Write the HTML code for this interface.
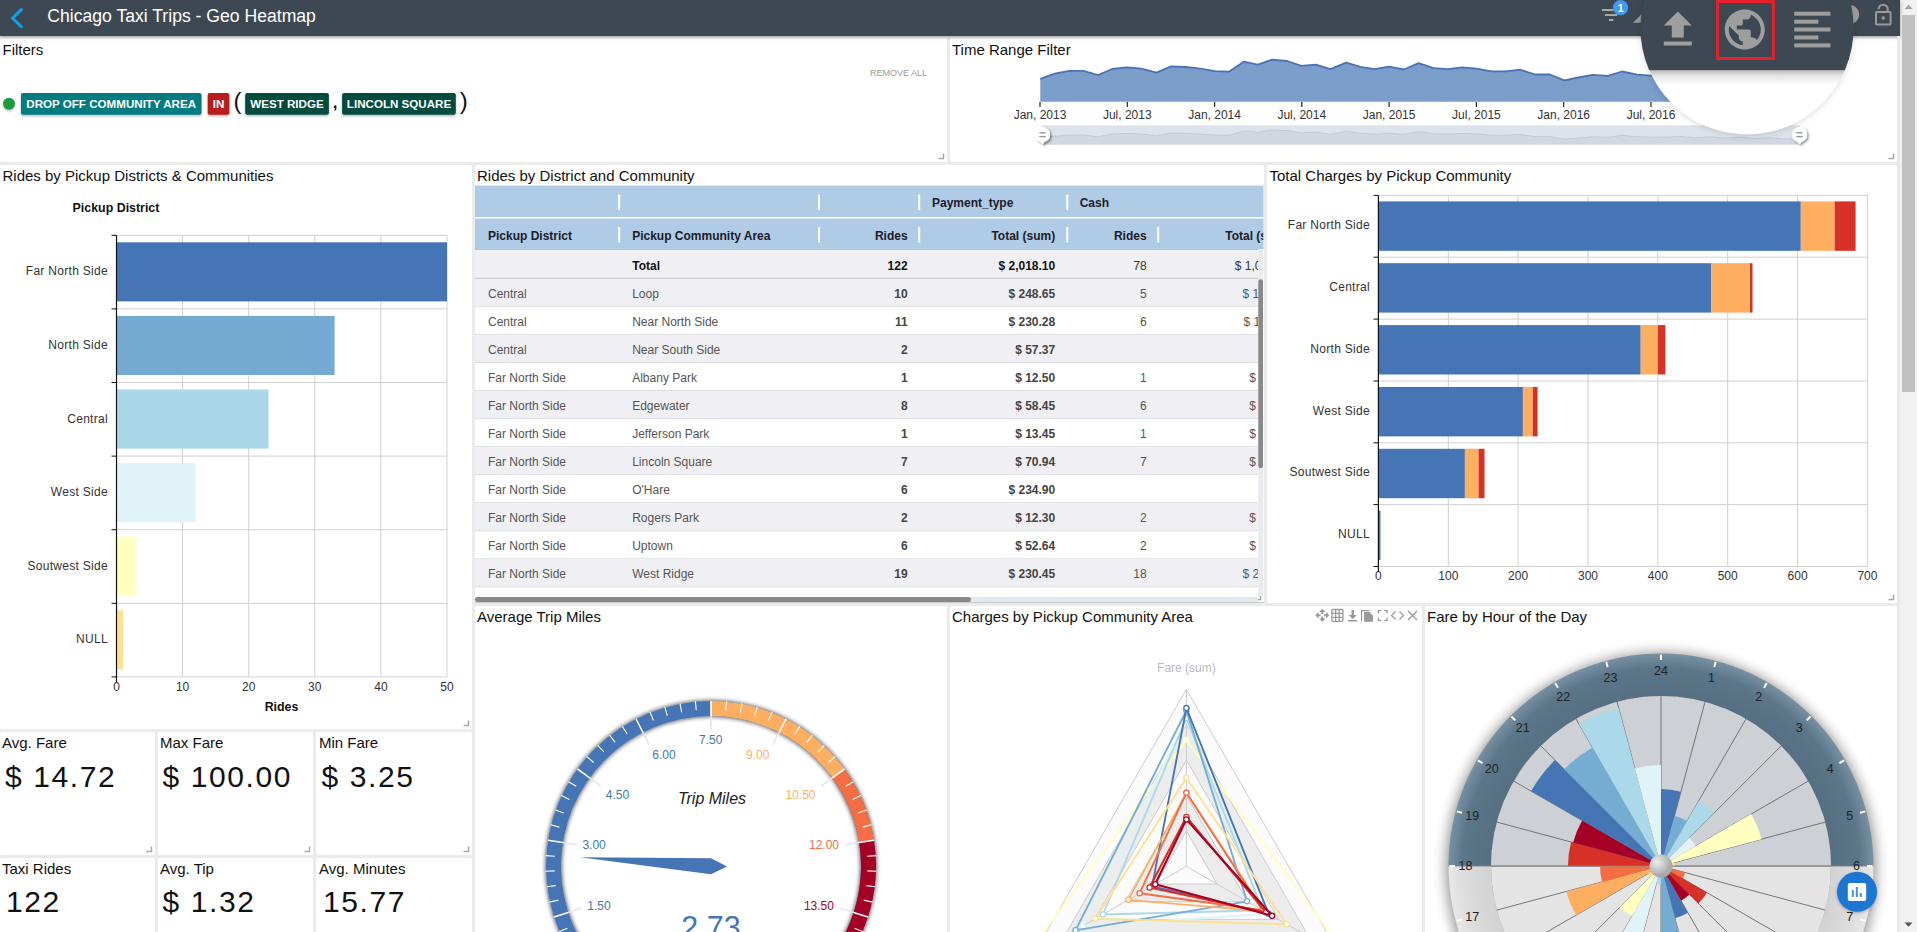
<!DOCTYPE html>
<html><head><meta charset="utf-8"><title>Chicago Taxi Trips - Geo Heatmap</title>
<style>
html,body{margin:0;padding:0;}
body{width:1917px;height:932px;overflow:hidden;background:#ebebeb;position:relative;font-family:"Liberation Sans",sans-serif;}
#hdr{position:absolute;left:0;top:0;width:1900px;height:36px;background:#3e4852;box-shadow:0 1px 4px rgba(0,0,0,.35);z-index:2;}
#sb{position:absolute;left:1900px;top:0;width:17px;height:932px;background:#f1f1f1;border-left:0;}
svg{position:absolute;left:0;top:0;z-index:1;}
#top{z-index:3;}
svg text{font-family:"Liberation Sans",sans-serif;}
</style></head><body>
<svg width="1917" height="932" viewBox="0 0 1917 932">
<rect x="0.0" y="38.0" width="947.0" height="124.0" fill="#fff" rx="2"/>
<rect x="950.0" y="38.0" width="947.0" height="124.0" fill="#fff" rx="2"/>
<rect x="0.0" y="165.0" width="472.0" height="564.0" fill="#fff" rx="2"/>
<rect x="475.0" y="165.0" width="789.0" height="438.0" fill="#fff" rx="2"/>
<rect x="1267.0" y="165.0" width="630.0" height="438.0" fill="#fff" rx="2"/>
<rect x="0.0" y="732.0" width="155.0" height="123.0" fill="#fff" rx="2"/>
<rect x="158.0" y="732.0" width="155.0" height="123.0" fill="#fff" rx="2"/>
<rect x="316.0" y="732.0" width="156.0" height="123.0" fill="#fff" rx="2"/>
<rect x="0.0" y="858.0" width="155.0" height="80.0" fill="#fff" rx="2"/>
<rect x="158.0" y="858.0" width="155.0" height="80.0" fill="#fff" rx="2"/>
<rect x="316.0" y="858.0" width="156.0" height="80.0" fill="#fff" rx="2"/>
<rect x="475.0" y="606.0" width="472.0" height="330.0" fill="#fff" rx="2"/>
<rect x="950.0" y="606.0" width="472.0" height="330.0" fill="#fff" rx="2"/>
<rect x="1425.0" y="606.0" width="472.0" height="330.0" fill="#fff" rx="2"/>
<path d="M938.5,158.5 H943.5 V153.5" stroke="#a8a8a8" stroke-width="1.5" fill="none"/>
<path d="M1888.5,158.5 H1893.5 V153.5" stroke="#a8a8a8" stroke-width="1.5" fill="none"/>
<path d="M463.5,725.5 H468.5 V720.5" stroke="#a8a8a8" stroke-width="1.5" fill="none"/>
<path d="M146.5,851.5 H151.5 V846.5" stroke="#a8a8a8" stroke-width="1.5" fill="none"/>
<path d="M304.5,851.5 H309.5 V846.5" stroke="#a8a8a8" stroke-width="1.5" fill="none"/>
<path d="M463.5,851.5 H468.5 V846.5" stroke="#a8a8a8" stroke-width="1.5" fill="none"/>
<path d="M1888.5,599.5 H1893.5 V594.5" stroke="#a8a8a8" stroke-width="1.5" fill="none"/>
<path d="M1255.5,599.5 H1260.5 V594.5" stroke="#a8a8a8" stroke-width="1.5" fill="none"/>
<text x="2.5" y="54.8" font-size="15" fill="#111" text-anchor="start" font-weight="normal" font-style="normal" >Filters</text>
<text x="952.0" y="54.8" font-size="15" fill="#111" text-anchor="start" font-weight="normal" font-style="normal" >Time Range Filter</text>
<text x="2.5" y="181.0" font-size="15" fill="#111" text-anchor="start" font-weight="normal" font-style="normal" >Rides by Pickup Districts &amp; Communities</text>
<text x="477.0" y="181.0" font-size="15" fill="#111" text-anchor="start" font-weight="normal" font-style="normal" >Rides by District and Community</text>
<text x="1269.5" y="181.0" font-size="15" fill="#111" text-anchor="start" font-weight="normal" font-style="normal" >Total Charges by Pickup Community</text>
<text x="477.0" y="622.0" font-size="15" fill="#111" text-anchor="start" font-weight="normal" font-style="normal" >Average Trip Miles</text>
<text x="952.0" y="622.0" font-size="15" fill="#111" text-anchor="start" font-weight="normal" font-style="normal" >Charges by Pickup Community Area</text>
<text x="1427.0" y="622.0" font-size="15" fill="#111" text-anchor="start" font-weight="normal" font-style="normal" >Fare by Hour of the Day</text>
<text x="2.0" y="747.8" font-size="15" fill="#111" text-anchor="start" font-weight="normal" font-style="normal" >Avg. Fare</text>
<text x="160.0" y="747.8" font-size="15" fill="#111" text-anchor="start" font-weight="normal" font-style="normal" >Max Fare</text>
<text x="319.0" y="747.8" font-size="15" fill="#111" text-anchor="start" font-weight="normal" font-style="normal" >Min Fare</text>
<text x="2.0" y="874.0" font-size="15" fill="#111" text-anchor="start" font-weight="normal" font-style="normal" >Taxi Rides</text>
<text x="160.0" y="874.0" font-size="15" fill="#111" text-anchor="start" font-weight="normal" font-style="normal" >Avg. Tip</text>
<text x="319.0" y="874.0" font-size="15" fill="#111" text-anchor="start" font-weight="normal" font-style="normal" >Avg. Minutes</text>
<text x="5.0" y="787.0" font-size="30" fill="#111" text-anchor="start" font-weight="normal" font-style="normal" letter-spacing="1.6">$ 14.72</text>
<text x="162.5" y="787.0" font-size="30" fill="#111" text-anchor="start" font-weight="normal" font-style="normal" letter-spacing="1.6">$ 100.00</text>
<text x="321.5" y="787.0" font-size="30" fill="#111" text-anchor="start" font-weight="normal" font-style="normal" letter-spacing="1.6">$ 3.25</text>
<text x="6.0" y="911.5" font-size="30" fill="#111" text-anchor="start" font-weight="normal" font-style="normal" letter-spacing="1.6">122</text>
<text x="162.5" y="911.5" font-size="30" fill="#111" text-anchor="start" font-weight="normal" font-style="normal" letter-spacing="1.6">$ 1.32</text>
<text x="323.0" y="911.5" font-size="30" fill="#111" text-anchor="start" font-weight="normal" font-style="normal" letter-spacing="1.6">15.77</text>
<defs><filter id="chipsh" x="-10%" y="-30%" width="120%" height="170%"><feDropShadow dx="0" dy="1.5" stdDeviation="1.3" flood-color="#000" flood-opacity="0.28"/></filter><filter id="hsh" x="-50%" y="-50%" width="200%" height="200%"><feDropShadow dx="1.5" dy="1.5" stdDeviation="1.2" flood-color="#000" flood-opacity="0.45"/></filter><filter id="soft" x="-30%" y="-30%" width="160%" height="160%"><feGaussianBlur stdDeviation="3"/></filter></defs>
<circle cx="9" cy="103.8" r="6" fill="#1f9a3d" filter="url(#chipsh)"/>
<rect x="21" y="93" width="180.5" height="21.7" rx="2" fill="#047b81" filter="url(#chipsh)"/>
<text x="111.2" y="108.0" font-size="11.6" fill="#fff" text-anchor="middle" font-weight="bold" font-style="normal" >DROP OFF COMMUNITY AREA</text>
<rect x="207.7" y="93" width="21.7" height="21.7" rx="2" fill="#b81c1e" filter="url(#chipsh)"/>
<text x="218.6" y="108.0" font-size="11.6" fill="#fff" text-anchor="middle" font-weight="bold" font-style="normal" >IN</text>
<rect x="245.2" y="93" width="83.7" height="21.7" rx="2" fill="#014d40" filter="url(#chipsh)"/>
<text x="287.0" y="108.0" font-size="11.6" fill="#fff" text-anchor="middle" font-weight="bold" font-style="normal" >WEST RIDGE</text>
<rect x="342.1" y="93" width="113.7" height="21.7" rx="2" fill="#014d40" filter="url(#chipsh)"/>
<text x="399.0" y="108.0" font-size="11.6" fill="#fff" text-anchor="middle" font-weight="bold" font-style="normal" >LINCOLN SQUARE</text>
<text x="233.5" y="108.8" font-size="24" fill="#111" text-anchor="start" font-weight="normal" font-style="normal" >(</text>
<text x="332.8" y="108.0" font-size="17" fill="#111" text-anchor="start" font-weight="bold" font-style="normal" >,</text>
<text x="459.8" y="108.8" font-size="24" fill="#111" text-anchor="start" font-weight="normal" font-style="normal" >)</text>
<text x="870.0" y="75.9" font-size="9" fill="#9a9a9a" text-anchor="start" font-weight="normal" font-style="normal" >REMOVE ALL</text>
<path d="M1040.3,101.8 L1040.3,78.9 L1054.7,73.7 L1069.2,70.9 L1083.4,70.9 L1098.1,75.0 L1112.1,69.0 L1126.8,67.4 L1141.4,68.7 L1156.4,72.7 L1171.1,66.4 L1185.3,67.0 L1200.3,68.7 L1215.0,71.2 L1229.0,71.7 L1243.7,61.7 L1257.9,64.7 L1272.1,59.7 L1287.1,61.0 L1301.3,65.9 L1315.8,64.7 L1330.5,69.2 L1346.2,62.6 L1360.4,66.9 L1374.6,69.2 L1388.8,66.7 L1403.9,69.5 L1418.6,63.2 L1433.5,68.1 L1447.7,69.2 L1462.4,67.4 L1476.6,68.7 L1491.6,71.3 L1505.8,71.3 L1520.0,69.7 L1535.1,74.5 L1549.8,74.5 L1564.4,80.4 L1578.6,77.5 L1592.7,74.9 L1607.8,75.9 L1622.0,71.5 L1637.1,74.7 L1651.3,75.6 L1666.0,76.0 L1680.0,74.0 L1695.0,77.0 L1710.0,75.0 L1725.0,78.0 L1740.0,76.0 L1755.0,79.0 L1770.0,77.0 L1785.0,80.0 L1800.0,79.0 L1800.0,101.8 Z" fill="#7b9dca"/>
<polyline points="1040.3,78.9 1054.7,73.7 1069.2,70.9 1083.4,70.9 1098.1,75.0 1112.1,69.0 1126.8,67.4 1141.4,68.7 1156.4,72.7 1171.1,66.4 1185.3,67.0 1200.3,68.7 1215.0,71.2 1229.0,71.7 1243.7,61.7 1257.9,64.7 1272.1,59.7 1287.1,61.0 1301.3,65.9 1315.8,64.7 1330.5,69.2 1346.2,62.6 1360.4,66.9 1374.6,69.2 1388.8,66.7 1403.9,69.5 1418.6,63.2 1433.5,68.1 1447.7,69.2 1462.4,67.4 1476.6,68.7 1491.6,71.3 1505.8,71.3 1520.0,69.7 1535.1,74.5 1549.8,74.5 1564.4,80.4 1578.6,77.5 1592.7,74.9 1607.8,75.9 1622.0,71.5 1637.1,74.7 1651.3,75.6 1666.0,76.0 1680.0,74.0 1695.0,77.0 1710.0,75.0 1725.0,78.0 1740.0,76.0 1755.0,79.0 1770.0,77.0 1785.0,80.0 1800.0,79.0" fill="none" stroke="#4a73b5" stroke-width="1.8" stroke-linejoin="round"/>
<line x1="1040.0" y1="102.0" x2="1040.0" y2="107.0" stroke="#222" stroke-width="1.2" />
<text x="1040.0" y="118.7" font-size="12" fill="#333" text-anchor="middle" font-weight="normal" font-style="normal" >Jan, 2013</text>
<line x1="1127.3" y1="102.0" x2="1127.3" y2="107.0" stroke="#222" stroke-width="1.2" />
<text x="1127.3" y="118.7" font-size="12" fill="#333" text-anchor="middle" font-weight="normal" font-style="normal" >Jul, 2013</text>
<line x1="1214.6" y1="102.0" x2="1214.6" y2="107.0" stroke="#222" stroke-width="1.2" />
<text x="1214.6" y="118.7" font-size="12" fill="#333" text-anchor="middle" font-weight="normal" font-style="normal" >Jan, 2014</text>
<line x1="1301.8" y1="102.0" x2="1301.8" y2="107.0" stroke="#222" stroke-width="1.2" />
<text x="1301.8" y="118.7" font-size="12" fill="#333" text-anchor="middle" font-weight="normal" font-style="normal" >Jul, 2014</text>
<line x1="1389.1" y1="102.0" x2="1389.1" y2="107.0" stroke="#222" stroke-width="1.2" />
<text x="1389.1" y="118.7" font-size="12" fill="#333" text-anchor="middle" font-weight="normal" font-style="normal" >Jan, 2015</text>
<line x1="1476.4" y1="102.0" x2="1476.4" y2="107.0" stroke="#222" stroke-width="1.2" />
<text x="1476.4" y="118.7" font-size="12" fill="#333" text-anchor="middle" font-weight="normal" font-style="normal" >Jul, 2015</text>
<line x1="1563.7" y1="102.0" x2="1563.7" y2="107.0" stroke="#222" stroke-width="1.2" />
<text x="1563.7" y="118.7" font-size="12" fill="#333" text-anchor="middle" font-weight="normal" font-style="normal" >Jan, 2016</text>
<line x1="1651.0" y1="102.0" x2="1651.0" y2="107.0" stroke="#222" stroke-width="1.2" />
<text x="1651.0" y="118.7" font-size="12" fill="#333" text-anchor="middle" font-weight="normal" font-style="normal" >Jul, 2016</text>
<rect x="1042" y="125.3" width="758" height="19.3" fill="#dde3eb"/>
<path d="M1042,144.6 L1040.3,138.5 L1054.7,136.2 L1069.2,135.0 L1083.4,135.0 L1098.1,136.8 L1112.1,134.1 L1126.8,133.4 L1141.4,134.0 L1156.4,135.8 L1171.1,133.0 L1185.3,133.3 L1200.3,134.0 L1215.0,135.1 L1229.0,135.3 L1243.7,130.9 L1257.9,132.2 L1272.1,130.0 L1287.1,130.6 L1301.3,132.8 L1315.8,132.2 L1330.5,134.2 L1346.2,131.3 L1360.4,133.2 L1374.6,134.2 L1388.8,133.1 L1403.9,134.4 L1418.6,131.6 L1433.5,133.7 L1447.7,134.2 L1462.4,133.4 L1476.6,134.0 L1491.6,135.2 L1505.8,135.2 L1520.0,134.5 L1535.1,136.6 L1549.8,136.6 L1564.4,139.2 L1578.6,137.9 L1592.7,136.8 L1607.8,137.2 L1622.0,135.3 L1637.1,136.7 L1651.3,137.1 L1666.0,137.2 L1680.0,136.4 L1695.0,137.7 L1710.0,136.8 L1725.0,138.1 L1740.0,137.2 L1755.0,138.6 L1770.0,137.7 L1785.0,139.0 L1800.0,138.6 L1800,144.6 Z" fill="#d0d7e0"/>
<polyline points="1040.3,138.5 1054.7,136.2 1069.2,135.0 1083.4,135.0 1098.1,136.8 1112.1,134.1 1126.8,133.4 1141.4,134.0 1156.4,135.8 1171.1,133.0 1185.3,133.3 1200.3,134.0 1215.0,135.1 1229.0,135.3 1243.7,130.9 1257.9,132.2 1272.1,130.0 1287.1,130.6 1301.3,132.8 1315.8,132.2 1330.5,134.2 1346.2,131.3 1360.4,133.2 1374.6,134.2 1388.8,133.1 1403.9,134.4 1418.6,131.6 1433.5,133.7 1447.7,134.2 1462.4,133.4 1476.6,134.0 1491.6,135.2 1505.8,135.2 1520.0,134.5 1535.1,136.6 1549.8,136.6 1564.4,139.2 1578.6,137.9 1592.7,136.8 1607.8,137.2 1622.0,135.3 1637.1,136.7 1651.3,137.1 1666.0,137.2 1680.0,136.4 1695.0,137.7 1710.0,136.8 1725.0,138.1 1740.0,137.2 1755.0,138.6 1770.0,137.7 1785.0,139.0 1800.0,138.6" fill="none" stroke="#bcc5d1" stroke-width="0.8"/>
<g filter="url(#hsh)"><circle cx="1042.5" cy="134.7" r="7.6" fill="#fff"/><path d="M1040.5,141.7 L1042.5,144.7 L1044.5,141.7 Z" fill="#fff"/></g>
<rect x="1039.3" y="132.1" width="6.4" height="1.4" fill="#999"/><rect x="1039.3" y="135.89999999999998" width="6.4" height="1.4" fill="#999"/>
<g filter="url(#hsh)"><circle cx="1799.5" cy="134.7" r="7.6" fill="#fff"/><path d="M1797.5,141.7 L1799.5,144.7 L1801.5,141.7 Z" fill="#fff"/></g>
<rect x="1796.3" y="132.1" width="6.4" height="1.4" fill="#999"/><rect x="1796.3" y="135.89999999999998" width="6.4" height="1.4" fill="#999"/>
<line x1="116.5" y1="235.3" x2="116.5" y2="676.9" stroke="#d0d0d0" stroke-width="1" />
<text x="116.5" y="691.3" font-size="12" fill="#333" text-anchor="middle" font-weight="normal" font-style="normal" >0</text>
<line x1="182.6" y1="235.3" x2="182.6" y2="676.9" stroke="#d0d0d0" stroke-width="1" />
<text x="182.6" y="691.3" font-size="12" fill="#333" text-anchor="middle" font-weight="normal" font-style="normal" >10</text>
<line x1="248.7" y1="235.3" x2="248.7" y2="676.9" stroke="#d0d0d0" stroke-width="1" />
<text x="248.7" y="691.3" font-size="12" fill="#333" text-anchor="middle" font-weight="normal" font-style="normal" >20</text>
<line x1="314.8" y1="235.3" x2="314.8" y2="676.9" stroke="#d0d0d0" stroke-width="1" />
<text x="314.8" y="691.3" font-size="12" fill="#333" text-anchor="middle" font-weight="normal" font-style="normal" >30</text>
<line x1="380.9" y1="235.3" x2="380.9" y2="676.9" stroke="#d0d0d0" stroke-width="1" />
<text x="380.9" y="691.3" font-size="12" fill="#333" text-anchor="middle" font-weight="normal" font-style="normal" >40</text>
<line x1="447.0" y1="235.3" x2="447.0" y2="676.9" stroke="#d0d0d0" stroke-width="1" />
<text x="447.0" y="691.3" font-size="12" fill="#333" text-anchor="middle" font-weight="normal" font-style="normal" >50</text>
<line x1="116.5" y1="235.3" x2="447.0" y2="235.3" stroke="#d0d0d0" stroke-width="1" />
<line x1="116.5" y1="308.9" x2="447.0" y2="308.9" stroke="#d0d0d0" stroke-width="1" />
<line x1="116.5" y1="382.5" x2="447.0" y2="382.5" stroke="#d0d0d0" stroke-width="1" />
<line x1="116.5" y1="456.1" x2="447.0" y2="456.1" stroke="#d0d0d0" stroke-width="1" />
<line x1="116.5" y1="529.7" x2="447.0" y2="529.7" stroke="#d0d0d0" stroke-width="1" />
<line x1="116.5" y1="603.3" x2="447.0" y2="603.3" stroke="#d0d0d0" stroke-width="1" />
<line x1="116.5" y1="676.9" x2="447.0" y2="676.9" stroke="#d0d0d0" stroke-width="1" />
<rect x="117.0" y="242.3" width="330.0" height="59.1" fill="#4575b4" />
<text x="108.0" y="275.4" font-size="12" fill="#333" text-anchor="end" font-weight="normal" font-style="normal" letter-spacing="0.3">Far North Side</text>
<line x1="111.5" y1="235.3" x2="116.5" y2="235.3" stroke="#111" stroke-width="1" />
<rect x="117.0" y="315.9" width="217.6" height="59.1" fill="#74aad2" />
<text x="108.0" y="349.0" font-size="12" fill="#333" text-anchor="end" font-weight="normal" font-style="normal" letter-spacing="0.3">North Side</text>
<line x1="111.5" y1="308.9" x2="116.5" y2="308.9" stroke="#111" stroke-width="1" />
<rect x="117.0" y="389.5" width="151.5" height="59.1" fill="#abd8e9" />
<text x="108.0" y="422.6" font-size="12" fill="#333" text-anchor="end" font-weight="normal" font-style="normal" letter-spacing="0.3">Central</text>
<line x1="111.5" y1="382.5" x2="116.5" y2="382.5" stroke="#111" stroke-width="1" />
<rect x="117.0" y="463.1" width="78.8" height="59.1" fill="#e0f3f8" />
<text x="108.0" y="496.2" font-size="12" fill="#333" text-anchor="end" font-weight="normal" font-style="normal" letter-spacing="0.3">West Side</text>
<line x1="111.5" y1="456.1" x2="116.5" y2="456.1" stroke="#111" stroke-width="1" />
<rect x="117.0" y="536.7" width="19.3" height="59.1" fill="#ffffbf" />
<text x="108.0" y="569.8" font-size="12" fill="#333" text-anchor="end" font-weight="normal" font-style="normal" letter-spacing="0.3">Soutwest Side</text>
<line x1="111.5" y1="529.7" x2="116.5" y2="529.7" stroke="#111" stroke-width="1" />
<rect x="117.0" y="610.3" width="6.1" height="59.1" fill="#fee090" />
<text x="108.0" y="643.4" font-size="12" fill="#333" text-anchor="end" font-weight="normal" font-style="normal" letter-spacing="0.3">NULL</text>
<line x1="111.5" y1="603.3" x2="116.5" y2="603.3" stroke="#111" stroke-width="1" />
<line x1="111.5" y1="676.9" x2="116.5" y2="676.9" stroke="#111" stroke-width="1" />
<line x1="116.5" y1="235.3" x2="116.5" y2="681.9" stroke="#111" stroke-width="1.2" />
<text x="116.0" y="211.8" font-size="12.4" fill="#111" text-anchor="middle" font-weight="bold" font-style="normal" >Pickup District</text>
<text x="281.5" y="711.0" font-size="12.4" fill="#111" text-anchor="middle" font-weight="bold" font-style="normal" >Rides</text>
<line x1="1378.4" y1="195.4" x2="1378.4" y2="566.5" stroke="#d0d0d0" stroke-width="1" />
<text x="1378.4" y="579.5" font-size="12" fill="#333" text-anchor="middle" font-weight="normal" font-style="normal" >0</text>
<line x1="1448.3" y1="195.4" x2="1448.3" y2="566.5" stroke="#d0d0d0" stroke-width="1" />
<text x="1448.3" y="579.5" font-size="12" fill="#333" text-anchor="middle" font-weight="normal" font-style="normal" >100</text>
<line x1="1518.1" y1="195.4" x2="1518.1" y2="566.5" stroke="#d0d0d0" stroke-width="1" />
<text x="1518.1" y="579.5" font-size="12" fill="#333" text-anchor="middle" font-weight="normal" font-style="normal" >200</text>
<line x1="1588.0" y1="195.4" x2="1588.0" y2="566.5" stroke="#d0d0d0" stroke-width="1" />
<text x="1588.0" y="579.5" font-size="12" fill="#333" text-anchor="middle" font-weight="normal" font-style="normal" >300</text>
<line x1="1657.8" y1="195.4" x2="1657.8" y2="566.5" stroke="#d0d0d0" stroke-width="1" />
<text x="1657.8" y="579.5" font-size="12" fill="#333" text-anchor="middle" font-weight="normal" font-style="normal" >400</text>
<line x1="1727.7" y1="195.4" x2="1727.7" y2="566.5" stroke="#d0d0d0" stroke-width="1" />
<text x="1727.7" y="579.5" font-size="12" fill="#333" text-anchor="middle" font-weight="normal" font-style="normal" >500</text>
<line x1="1797.6" y1="195.4" x2="1797.6" y2="566.5" stroke="#d0d0d0" stroke-width="1" />
<text x="1797.6" y="579.5" font-size="12" fill="#333" text-anchor="middle" font-weight="normal" font-style="normal" >600</text>
<line x1="1867.4" y1="195.4" x2="1867.4" y2="566.5" stroke="#d0d0d0" stroke-width="1" />
<text x="1867.4" y="579.5" font-size="12" fill="#333" text-anchor="middle" font-weight="normal" font-style="normal" >700</text>
<line x1="1378.4" y1="195.4" x2="1867.4" y2="195.4" stroke="#d0d0d0" stroke-width="1" />
<line x1="1378.4" y1="257.2" x2="1867.4" y2="257.2" stroke="#d0d0d0" stroke-width="1" />
<line x1="1378.4" y1="319.1" x2="1867.4" y2="319.1" stroke="#d0d0d0" stroke-width="1" />
<line x1="1378.4" y1="381.0" x2="1867.4" y2="381.0" stroke="#d0d0d0" stroke-width="1" />
<line x1="1378.4" y1="442.8" x2="1867.4" y2="442.8" stroke="#d0d0d0" stroke-width="1" />
<line x1="1378.4" y1="504.6" x2="1867.4" y2="504.6" stroke="#d0d0d0" stroke-width="1" />
<line x1="1378.4" y1="566.5" x2="1867.4" y2="566.5" stroke="#d0d0d0" stroke-width="1" />
<rect x="1378.9" y="201.4" width="421.9" height="49.4" fill="#4575b4" />
<rect x="1800.8" y="201.4" width="33.9" height="49.4" fill="#fdae61" />
<rect x="1834.7" y="201.4" width="20.9" height="49.4" fill="#d73027" />
<text x="1370.0" y="229.0" font-size="12" fill="#333" text-anchor="end" font-weight="normal" font-style="normal" letter-spacing="0.3">Far North Side</text>
<line x1="1373.5" y1="195.4" x2="1378.4" y2="195.4" stroke="#111" stroke-width="1" />
<rect x="1378.9" y="263.2" width="332.4" height="49.4" fill="#4575b4" />
<rect x="1711.3" y="263.2" width="38.7" height="49.4" fill="#fdae61" />
<rect x="1750.0" y="263.2" width="2.5" height="49.4" fill="#d73027" />
<text x="1370.0" y="290.9" font-size="12" fill="#333" text-anchor="end" font-weight="normal" font-style="normal" letter-spacing="0.3">Central</text>
<line x1="1373.5" y1="257.2" x2="1378.4" y2="257.2" stroke="#111" stroke-width="1" />
<rect x="1378.9" y="325.1" width="261.8" height="49.4" fill="#4575b4" />
<rect x="1640.7" y="325.1" width="17.2" height="49.4" fill="#fdae61" />
<rect x="1657.9" y="325.1" width="7.5" height="49.4" fill="#d73027" />
<text x="1370.0" y="352.7" font-size="12" fill="#333" text-anchor="end" font-weight="normal" font-style="normal" letter-spacing="0.3">North Side</text>
<line x1="1373.5" y1="319.1" x2="1378.4" y2="319.1" stroke="#111" stroke-width="1" />
<rect x="1378.9" y="387.0" width="144.0" height="49.4" fill="#4575b4" />
<rect x="1522.9" y="387.0" width="9.9" height="49.4" fill="#fdae61" />
<rect x="1532.8" y="387.0" width="4.8" height="49.4" fill="#d73027" />
<text x="1370.0" y="414.6" font-size="12" fill="#333" text-anchor="end" font-weight="normal" font-style="normal" letter-spacing="0.3">West Side</text>
<line x1="1373.5" y1="381.0" x2="1378.4" y2="381.0" stroke="#111" stroke-width="1" />
<rect x="1378.9" y="448.8" width="86.0" height="49.4" fill="#4575b4" />
<rect x="1464.9" y="448.8" width="13.7" height="49.4" fill="#fdae61" />
<rect x="1478.6" y="448.8" width="5.9" height="49.4" fill="#d73027" />
<text x="1370.0" y="476.4" font-size="12" fill="#333" text-anchor="end" font-weight="normal" font-style="normal" letter-spacing="0.3">Soutwest Side</text>
<line x1="1373.5" y1="442.8" x2="1378.4" y2="442.8" stroke="#111" stroke-width="1" />
<rect x="1378.9" y="510.6" width="1.6" height="49.4" fill="#4575b4" />
<text x="1370.0" y="538.3" font-size="12" fill="#333" text-anchor="end" font-weight="normal" font-style="normal" letter-spacing="0.3">NULL</text>
<line x1="1373.5" y1="504.6" x2="1378.4" y2="504.6" stroke="#111" stroke-width="1" />
<line x1="1373.5" y1="566.5" x2="1378.4" y2="566.5" stroke="#111" stroke-width="1" />
<line x1="1378.4" y1="195.4" x2="1378.4" y2="571.5" stroke="#111" stroke-width="1.2" />
<defs><clipPath id="tclip"><rect x="475" y="185" width="783.3" height="412"/></clipPath></defs>
<rect x="475.0" y="185.6" width="788.5" height="31.4" fill="#b0cbe5" />
<rect x="475.0" y="218.5" width="788.5" height="30.8" fill="#b0cbe5" />
<defs><clipPath id="hclip"><rect x="475" y="185" width="788.3" height="65"/></clipPath></defs><g clip-path="url(#hclip)">
<text x="1225.2" y="239.8" font-size="12" fill="#1b1b2a" text-anchor="start" font-weight="bold" font-style="normal" >Total (sum)</text>
</g>
<g clip-path="url(#tclip)">
<line x1="475.0" y1="249.5" x2="1264.0" y2="249.5" stroke="#b9c3cc" stroke-width="1" />
<line x1="619.2" y1="194.5" x2="619.2" y2="210.0" stroke="#fff" stroke-width="2" />
<line x1="819.0" y1="194.5" x2="819.0" y2="210.0" stroke="#fff" stroke-width="2" />
<line x1="919.2" y1="194.5" x2="919.2" y2="210.0" stroke="#fff" stroke-width="2" />
<line x1="1067.3" y1="194.5" x2="1067.3" y2="210.0" stroke="#fff" stroke-width="2" />
<line x1="619.2" y1="227.0" x2="619.2" y2="242.5" stroke="#fff" stroke-width="2" />
<line x1="819.0" y1="227.0" x2="819.0" y2="242.5" stroke="#fff" stroke-width="2" />
<line x1="919.2" y1="227.0" x2="919.2" y2="242.5" stroke="#fff" stroke-width="2" />
<line x1="1067.3" y1="227.0" x2="1067.3" y2="242.5" stroke="#fff" stroke-width="2" />
<line x1="1158.2" y1="227.0" x2="1158.2" y2="242.5" stroke="#fff" stroke-width="2" />
<text x="932.0" y="207.1" font-size="12" fill="#1b1b2a" text-anchor="start" font-weight="bold" font-style="normal" >Payment_type</text>
<text x="1079.7" y="207.1" font-size="12" fill="#1b1b2a" text-anchor="start" font-weight="bold" font-style="normal" >Cash</text>
<text x="488.0" y="239.8" font-size="12" fill="#1b1b2a" text-anchor="start" font-weight="bold" font-style="normal" >Pickup District</text>
<text x="632.2" y="239.8" font-size="12" fill="#1b1b2a" text-anchor="start" font-weight="bold" font-style="normal" >Pickup Community Area</text>
<text x="907.6" y="239.8" font-size="12" fill="#1b1b2a" text-anchor="end" font-weight="bold" font-style="normal" >Rides</text>
<text x="1055.2" y="239.8" font-size="12" fill="#1b1b2a" text-anchor="end" font-weight="bold" font-style="normal" >Total (sum)</text>
<text x="1146.6" y="239.8" font-size="12" fill="#1b1b2a" text-anchor="end" font-weight="bold" font-style="normal" >Rides</text>
<rect x="475.0" y="250.0" width="789.0" height="28.3" fill="#f0f0f4" />
<line x1="475.0" y1="278.3" x2="1264.0" y2="278.3" stroke="#c4c8cd" stroke-width="1.2" />
<text x="632.2" y="269.5" font-size="12" fill="#111" text-anchor="start" font-weight="bold" font-style="normal" >Total</text>
<text x="907.6" y="269.5" font-size="12" fill="#111" text-anchor="end" font-weight="bold" font-style="normal" >122</text>
<text x="1055.2" y="269.5" font-size="12" fill="#111" text-anchor="end" font-weight="bold" font-style="normal" >$ 2,018.10</text>
<text x="1146.6" y="269.5" font-size="12" fill="#333" text-anchor="end" font-weight="normal" font-style="normal" >78</text>
<text x="1234.8" y="269.5" font-size="12" fill="#333" text-anchor="start" font-weight="normal" font-style="normal" >$ 1,076.10</text>
<rect x="475.0" y="278.9" width="789.0" height="27.4" fill="#f0f0f4" />
<line x1="475.0" y1="306.4" x2="1264.0" y2="306.4" stroke="#d9dce0" stroke-width="1" />
<text x="488.0" y="297.9" font-size="12" fill="#555" text-anchor="start" font-weight="normal" font-style="normal" >Central</text>
<text x="632.2" y="297.9" font-size="12" fill="#555" text-anchor="start" font-weight="normal" font-style="normal" >Loop</text>
<text x="907.6" y="297.9" font-size="12" fill="#444" text-anchor="end" font-weight="bold" font-style="normal" >10</text>
<text x="1055.2" y="297.9" font-size="12" fill="#444" text-anchor="end" font-weight="bold" font-style="normal" >$ 248.65</text>
<text x="1146.6" y="297.9" font-size="12" fill="#555" text-anchor="end" font-weight="normal" font-style="normal" >5</text>
<text x="1289.3" y="297.9" font-size="12" fill="#555" text-anchor="end" font-weight="normal" font-style="normal" >$ 124.50</text>
<line x1="475.0" y1="334.4" x2="1264.0" y2="334.4" stroke="#d9dce0" stroke-width="1" />
<text x="488.0" y="326.0" font-size="12" fill="#555" text-anchor="start" font-weight="normal" font-style="normal" >Central</text>
<text x="632.2" y="326.0" font-size="12" fill="#555" text-anchor="start" font-weight="normal" font-style="normal" >Near North Side</text>
<text x="907.6" y="326.0" font-size="12" fill="#444" text-anchor="end" font-weight="bold" font-style="normal" >11</text>
<text x="1055.2" y="326.0" font-size="12" fill="#444" text-anchor="end" font-weight="bold" font-style="normal" >$ 230.28</text>
<text x="1146.6" y="326.0" font-size="12" fill="#555" text-anchor="end" font-weight="normal" font-style="normal" >6</text>
<text x="1289.3" y="326.0" font-size="12" fill="#555" text-anchor="end" font-weight="normal" font-style="normal" >$ 117.80</text>
<rect x="475.0" y="335.0" width="789.0" height="27.4" fill="#f0f0f4" />
<line x1="475.0" y1="362.5" x2="1264.0" y2="362.5" stroke="#d9dce0" stroke-width="1" />
<text x="488.0" y="354.0" font-size="12" fill="#555" text-anchor="start" font-weight="normal" font-style="normal" >Central</text>
<text x="632.2" y="354.0" font-size="12" fill="#555" text-anchor="start" font-weight="normal" font-style="normal" >Near South Side</text>
<text x="907.6" y="354.0" font-size="12" fill="#444" text-anchor="end" font-weight="bold" font-style="normal" >2</text>
<text x="1055.2" y="354.0" font-size="12" fill="#444" text-anchor="end" font-weight="bold" font-style="normal" >$ 57.37</text>
<line x1="475.0" y1="390.5" x2="1264.0" y2="390.5" stroke="#d9dce0" stroke-width="1" />
<text x="488.0" y="382.1" font-size="12" fill="#555" text-anchor="start" font-weight="normal" font-style="normal" >Far North Side</text>
<text x="632.2" y="382.1" font-size="12" fill="#555" text-anchor="start" font-weight="normal" font-style="normal" >Albany Park</text>
<text x="907.6" y="382.1" font-size="12" fill="#444" text-anchor="end" font-weight="bold" font-style="normal" >1</text>
<text x="1055.2" y="382.1" font-size="12" fill="#444" text-anchor="end" font-weight="bold" font-style="normal" >$ 12.50</text>
<text x="1146.6" y="382.1" font-size="12" fill="#555" text-anchor="end" font-weight="normal" font-style="normal" >1</text>
<text x="1289.3" y="382.1" font-size="12" fill="#555" text-anchor="end" font-weight="normal" font-style="normal" >$ 12.50</text>
<rect x="475.0" y="391.1" width="789.0" height="27.4" fill="#f0f0f4" />
<line x1="475.0" y1="418.6" x2="1264.0" y2="418.6" stroke="#d9dce0" stroke-width="1" />
<text x="488.0" y="410.1" font-size="12" fill="#555" text-anchor="start" font-weight="normal" font-style="normal" >Far North Side</text>
<text x="632.2" y="410.1" font-size="12" fill="#555" text-anchor="start" font-weight="normal" font-style="normal" >Edgewater</text>
<text x="907.6" y="410.1" font-size="12" fill="#444" text-anchor="end" font-weight="bold" font-style="normal" >8</text>
<text x="1055.2" y="410.1" font-size="12" fill="#444" text-anchor="end" font-weight="bold" font-style="normal" >$ 58.45</text>
<text x="1146.6" y="410.1" font-size="12" fill="#555" text-anchor="end" font-weight="normal" font-style="normal" >6</text>
<text x="1289.3" y="410.1" font-size="12" fill="#555" text-anchor="end" font-weight="normal" font-style="normal" >$ 45.30</text>
<line x1="475.0" y1="446.6" x2="1264.0" y2="446.6" stroke="#d9dce0" stroke-width="1" />
<text x="488.0" y="438.2" font-size="12" fill="#555" text-anchor="start" font-weight="normal" font-style="normal" >Far North Side</text>
<text x="632.2" y="438.2" font-size="12" fill="#555" text-anchor="start" font-weight="normal" font-style="normal" >Jefferson Park</text>
<text x="907.6" y="438.2" font-size="12" fill="#444" text-anchor="end" font-weight="bold" font-style="normal" >1</text>
<text x="1055.2" y="438.2" font-size="12" fill="#444" text-anchor="end" font-weight="bold" font-style="normal" >$ 13.45</text>
<text x="1146.6" y="438.2" font-size="12" fill="#555" text-anchor="end" font-weight="normal" font-style="normal" >1</text>
<text x="1289.3" y="438.2" font-size="12" fill="#555" text-anchor="end" font-weight="normal" font-style="normal" >$ 13.45</text>
<rect x="475.0" y="447.2" width="789.0" height="27.4" fill="#f0f0f4" />
<line x1="475.0" y1="474.7" x2="1264.0" y2="474.7" stroke="#d9dce0" stroke-width="1" />
<text x="488.0" y="466.2" font-size="12" fill="#555" text-anchor="start" font-weight="normal" font-style="normal" >Far North Side</text>
<text x="632.2" y="466.2" font-size="12" fill="#555" text-anchor="start" font-weight="normal" font-style="normal" >Lincoln Square</text>
<text x="907.6" y="466.2" font-size="12" fill="#444" text-anchor="end" font-weight="bold" font-style="normal" >7</text>
<text x="1055.2" y="466.2" font-size="12" fill="#444" text-anchor="end" font-weight="bold" font-style="normal" >$ 70.94</text>
<text x="1146.6" y="466.2" font-size="12" fill="#555" text-anchor="end" font-weight="normal" font-style="normal" >7</text>
<text x="1289.3" y="466.2" font-size="12" fill="#555" text-anchor="end" font-weight="normal" font-style="normal" >$ 70.94</text>
<line x1="475.0" y1="502.7" x2="1264.0" y2="502.7" stroke="#d9dce0" stroke-width="1" />
<text x="488.0" y="494.2" font-size="12" fill="#555" text-anchor="start" font-weight="normal" font-style="normal" >Far North Side</text>
<text x="632.2" y="494.2" font-size="12" fill="#555" text-anchor="start" font-weight="normal" font-style="normal" >O'Hare</text>
<text x="907.6" y="494.2" font-size="12" fill="#444" text-anchor="end" font-weight="bold" font-style="normal" >6</text>
<text x="1055.2" y="494.2" font-size="12" fill="#444" text-anchor="end" font-weight="bold" font-style="normal" >$ 234.90</text>
<rect x="475.0" y="503.3" width="789.0" height="27.4" fill="#f0f0f4" />
<line x1="475.0" y1="530.8" x2="1264.0" y2="530.8" stroke="#d9dce0" stroke-width="1" />
<text x="488.0" y="522.3" font-size="12" fill="#555" text-anchor="start" font-weight="normal" font-style="normal" >Far North Side</text>
<text x="632.2" y="522.3" font-size="12" fill="#555" text-anchor="start" font-weight="normal" font-style="normal" >Rogers Park</text>
<text x="907.6" y="522.3" font-size="12" fill="#444" text-anchor="end" font-weight="bold" font-style="normal" >2</text>
<text x="1055.2" y="522.3" font-size="12" fill="#444" text-anchor="end" font-weight="bold" font-style="normal" >$ 12.30</text>
<text x="1146.6" y="522.3" font-size="12" fill="#555" text-anchor="end" font-weight="normal" font-style="normal" >2</text>
<text x="1289.3" y="522.3" font-size="12" fill="#555" text-anchor="end" font-weight="normal" font-style="normal" >$ 12.30</text>
<line x1="475.0" y1="558.8" x2="1264.0" y2="558.8" stroke="#d9dce0" stroke-width="1" />
<text x="488.0" y="550.4" font-size="12" fill="#555" text-anchor="start" font-weight="normal" font-style="normal" >Far North Side</text>
<text x="632.2" y="550.4" font-size="12" fill="#555" text-anchor="start" font-weight="normal" font-style="normal" >Uptown</text>
<text x="907.6" y="550.4" font-size="12" fill="#444" text-anchor="end" font-weight="bold" font-style="normal" >6</text>
<text x="1055.2" y="550.4" font-size="12" fill="#444" text-anchor="end" font-weight="bold" font-style="normal" >$ 52.64</text>
<text x="1146.6" y="550.4" font-size="12" fill="#555" text-anchor="end" font-weight="normal" font-style="normal" >2</text>
<text x="1289.3" y="550.4" font-size="12" fill="#555" text-anchor="end" font-weight="normal" font-style="normal" >$ 18.20</text>
<rect x="475.0" y="559.4" width="789.0" height="27.4" fill="#f0f0f4" />
<line x1="475.0" y1="586.8" x2="1264.0" y2="586.8" stroke="#d9dce0" stroke-width="1" />
<text x="488.0" y="578.4" font-size="12" fill="#555" text-anchor="start" font-weight="normal" font-style="normal" >Far North Side</text>
<text x="632.2" y="578.4" font-size="12" fill="#555" text-anchor="start" font-weight="normal" font-style="normal" >West Ridge</text>
<text x="907.6" y="578.4" font-size="12" fill="#444" text-anchor="end" font-weight="bold" font-style="normal" >19</text>
<text x="1055.2" y="578.4" font-size="12" fill="#444" text-anchor="end" font-weight="bold" font-style="normal" >$ 230.45</text>
<text x="1146.6" y="578.4" font-size="12" fill="#555" text-anchor="end" font-weight="normal" font-style="normal" >18</text>
<text x="1289.3" y="578.4" font-size="12" fill="#555" text-anchor="end" font-weight="normal" font-style="normal" >$ 210.45</text>
</g>
<rect x="1258.3" y="250.0" width="5.0" height="346.0" fill="#e8eaed" />
<rect x="1258.3" y="279.3" width="4.7" height="189" rx="2.3" fill="#888"/>
<rect x="475.0" y="597.0" width="783.0" height="5.0" fill="#e6e9ec" />
<line x1="475.0" y1="602.5" x2="1264.0" y2="602.5" stroke="#c5cbd0" stroke-width="1" />
<rect x="475" y="597" width="496" height="5" rx="2.5" fill="#888"/>
<defs><filter id="gsh" x="-20%" y="-20%" width="140%" height="140%"><feGaussianBlur in="SourceAlpha" stdDeviation="2.4"/><feOffset dx="0" dy="0"/><feComponentTransfer><feFuncA type="linear" slope="0.85"/></feComponentTransfer><feMerge><feMergeNode/><feMergeNode in="SourceGraphic"/></feMerge></filter></defs>
<g filter="url(#gsh)">
<path d="M594.33,982.67 A165,165 0 1 1 827.67,982.67 L817.07,972.07 A150,150 0 1 0 604.93,972.07 Z" fill="#4575b4" />
</g>
<path d="M711.00,701.00 A165,165 0 0 1 844.49,769.02 L832.35,777.83 A150,150 0 0 0 711.00,716.00 Z" fill="#fdae61" />
<path d="M844.49,769.02 A165,165 0 0 1 873.97,840.19 L859.15,842.53 A150,150 0 0 0 832.35,777.83 Z" fill="#f46d43" />
<path d="M873.97,840.19 A165,165 0 0 1 827.67,982.67 L817.07,972.07 A150,150 0 0 0 859.15,842.53 Z" fill="#a50026" />
<line x1="594.3" y1="982.7" x2="604.9" y2="972.1" stroke="#fff" stroke-width="1.6" />
<line x1="604.9" y1="972.1" x2="614.8" y2="962.2" stroke="#e6e6e6" stroke-width="1.6" />
<line x1="583.5" y1="971.5" x2="590.4" y2="965.8" stroke="#fff" stroke-width="1.1" />
<line x1="574.1" y1="959.0" x2="581.6" y2="954.0" stroke="#fff" stroke-width="1.1" />
<line x1="566.0" y1="945.7" x2="573.9" y2="941.4" stroke="#fff" stroke-width="1.1" />
<line x1="559.1" y1="931.7" x2="567.4" y2="928.2" stroke="#fff" stroke-width="1.1" />
<line x1="554.1" y1="917.0" x2="568.3" y2="912.4" stroke="#fff" stroke-width="1.6" />
<line x1="568.3" y1="912.4" x2="581.7" y2="908.0" stroke="#e6e6e6" stroke-width="1.6" />
<line x1="549.5" y1="902.1" x2="558.3" y2="900.1" stroke="#fff" stroke-width="1.1" />
<line x1="546.8" y1="886.7" x2="555.7" y2="885.6" stroke="#fff" stroke-width="1.1" />
<line x1="545.6" y1="871.2" x2="554.6" y2="870.9" stroke="#fff" stroke-width="1.1" />
<line x1="545.8" y1="855.6" x2="554.8" y2="856.2" stroke="#fff" stroke-width="1.1" />
<line x1="548.0" y1="840.2" x2="562.8" y2="842.5" stroke="#fff" stroke-width="1.6" />
<line x1="562.8" y1="842.5" x2="576.7" y2="844.7" stroke="#e6e6e6" stroke-width="1.6" />
<line x1="550.7" y1="824.8" x2="559.4" y2="827.1" stroke="#fff" stroke-width="1.1" />
<line x1="555.3" y1="809.9" x2="563.8" y2="813.0" stroke="#fff" stroke-width="1.1" />
<line x1="561.3" y1="795.5" x2="569.4" y2="799.4" stroke="#fff" stroke-width="1.1" />
<line x1="568.5" y1="781.8" x2="576.3" y2="786.3" stroke="#fff" stroke-width="1.1" />
<line x1="577.5" y1="769.0" x2="589.6" y2="777.8" stroke="#fff" stroke-width="1.6" />
<line x1="589.6" y1="777.8" x2="601.0" y2="786.1" stroke="#e6e6e6" stroke-width="1.6" />
<line x1="586.9" y1="756.6" x2="593.6" y2="762.5" stroke="#fff" stroke-width="1.1" />
<line x1="597.7" y1="745.4" x2="603.9" y2="751.9" stroke="#fff" stroke-width="1.1" />
<line x1="609.6" y1="735.2" x2="615.1" y2="742.3" stroke="#fff" stroke-width="1.1" />
<line x1="622.3" y1="726.3" x2="627.1" y2="733.9" stroke="#fff" stroke-width="1.1" />
<line x1="636.1" y1="719.0" x2="642.9" y2="732.3" stroke="#fff" stroke-width="1.6" />
<line x1="642.9" y1="732.3" x2="649.3" y2="744.8" stroke="#e6e6e6" stroke-width="1.6" />
<line x1="650.1" y1="712.1" x2="653.4" y2="720.5" stroke="#fff" stroke-width="1.1" />
<line x1="664.8" y1="707.1" x2="667.3" y2="715.7" stroke="#fff" stroke-width="1.1" />
<line x1="680.0" y1="703.4" x2="681.7" y2="712.3" stroke="#fff" stroke-width="1.1" />
<line x1="695.4" y1="701.2" x2="696.3" y2="710.2" stroke="#fff" stroke-width="1.1" />
<line x1="711.0" y1="701.0" x2="711.0" y2="716.0" stroke="#fff" stroke-width="1.6" />
<line x1="711.0" y1="716.0" x2="711.0" y2="730.0" stroke="#e6e6e6" stroke-width="1.6" />
<line x1="726.6" y1="701.2" x2="725.7" y2="710.2" stroke="#fff" stroke-width="1.1" />
<line x1="742.0" y1="703.4" x2="740.3" y2="712.3" stroke="#fff" stroke-width="1.1" />
<line x1="757.2" y1="707.1" x2="754.7" y2="715.7" stroke="#fff" stroke-width="1.1" />
<line x1="771.9" y1="712.1" x2="768.6" y2="720.5" stroke="#fff" stroke-width="1.1" />
<line x1="785.9" y1="719.0" x2="779.1" y2="732.3" stroke="#fff" stroke-width="1.6" />
<line x1="779.1" y1="732.3" x2="772.7" y2="744.8" stroke="#e6e6e6" stroke-width="1.6" />
<line x1="799.7" y1="726.3" x2="794.9" y2="733.9" stroke="#fff" stroke-width="1.1" />
<line x1="812.4" y1="735.2" x2="806.9" y2="742.3" stroke="#fff" stroke-width="1.1" />
<line x1="824.3" y1="745.4" x2="818.1" y2="751.9" stroke="#fff" stroke-width="1.1" />
<line x1="835.1" y1="756.6" x2="828.4" y2="762.5" stroke="#fff" stroke-width="1.1" />
<line x1="844.5" y1="769.0" x2="832.4" y2="777.8" stroke="#fff" stroke-width="1.6" />
<line x1="832.4" y1="777.8" x2="821.0" y2="786.1" stroke="#e6e6e6" stroke-width="1.6" />
<line x1="853.5" y1="781.8" x2="845.7" y2="786.3" stroke="#fff" stroke-width="1.1" />
<line x1="860.7" y1="795.5" x2="852.6" y2="799.4" stroke="#fff" stroke-width="1.1" />
<line x1="866.7" y1="809.9" x2="858.2" y2="813.0" stroke="#fff" stroke-width="1.1" />
<line x1="871.3" y1="824.8" x2="862.6" y2="827.1" stroke="#fff" stroke-width="1.1" />
<line x1="874.0" y1="840.2" x2="859.2" y2="842.5" stroke="#fff" stroke-width="1.6" />
<line x1="859.2" y1="842.5" x2="845.3" y2="844.7" stroke="#e6e6e6" stroke-width="1.6" />
<line x1="876.2" y1="855.6" x2="867.2" y2="856.2" stroke="#fff" stroke-width="1.1" />
<line x1="876.4" y1="871.2" x2="867.4" y2="870.9" stroke="#fff" stroke-width="1.1" />
<line x1="875.2" y1="886.7" x2="866.3" y2="885.6" stroke="#fff" stroke-width="1.1" />
<line x1="872.5" y1="902.1" x2="863.7" y2="900.1" stroke="#fff" stroke-width="1.1" />
<line x1="867.9" y1="917.0" x2="853.7" y2="912.4" stroke="#fff" stroke-width="1.6" />
<line x1="853.7" y1="912.4" x2="840.3" y2="908.0" stroke="#e6e6e6" stroke-width="1.6" />
<line x1="862.9" y1="931.7" x2="854.6" y2="928.2" stroke="#fff" stroke-width="1.1" />
<line x1="856.0" y1="945.7" x2="848.1" y2="941.4" stroke="#fff" stroke-width="1.1" />
<line x1="847.9" y1="959.0" x2="840.4" y2="954.0" stroke="#fff" stroke-width="1.1" />
<line x1="838.5" y1="971.5" x2="831.6" y2="965.8" stroke="#fff" stroke-width="1.1" />
<line x1="827.7" y1="982.7" x2="817.1" y2="972.1" stroke="#fff" stroke-width="1.6" />
<line x1="817.1" y1="972.1" x2="807.2" y2="962.2" stroke="#e6e6e6" stroke-width="1.6" />
<text x="599.0" y="909.5" font-size="12" fill="#4575b4" text-anchor="middle" font-weight="normal" font-style="normal" >1.50</text>
<text x="594.1" y="848.5" font-size="12" fill="#4575b4" text-anchor="middle" font-weight="normal" font-style="normal" >3.00</text>
<text x="617.4" y="798.6" font-size="12" fill="#4575b4" text-anchor="middle" font-weight="normal" font-style="normal" >4.50</text>
<text x="663.9" y="759.4" font-size="12" fill="#4575b4" text-anchor="middle" font-weight="normal" font-style="normal" >6.00</text>
<text x="710.7" y="744.2" font-size="12" fill="#4575b4" text-anchor="middle" font-weight="normal" font-style="normal" >7.50</text>
<text x="757.7" y="759.4" font-size="12" fill="#fdae61" text-anchor="middle" font-weight="normal" font-style="normal" >9.00</text>
<text x="800.5" y="798.6" font-size="12" fill="#fdae61" text-anchor="middle" font-weight="normal" font-style="normal" >10.50</text>
<text x="824.0" y="848.5" font-size="12" fill="#f46d43" text-anchor="middle" font-weight="normal" font-style="normal" >12.00</text>
<text x="818.9" y="909.5" font-size="12" fill="#a50026" text-anchor="middle" font-weight="normal" font-style="normal" >13.50</text>
<text x="712.0" y="803.8" font-size="16" fill="#222" text-anchor="middle" font-weight="normal" font-style="italic" >Trip Miles</text>
<path d="M580,857.3 L711,858.3 L727,866.4 L711,874.3 Z" fill="#4575b4"/>
<text x="711.0" y="938.0" font-size="30.5" fill="#4575b4" text-anchor="middle" font-weight="normal" font-style="normal" >2.73</text>
<defs><clipPath id="rclip"><rect x="950" y="630" width="472" height="302"/></clipPath></defs>
<g clip-path="url(#rclip)">
<polygon points="1186.40,689.30 1033.11,954.80 1339.69,954.80" fill="#fbfbfb" stroke="#cccccc" stroke-width="1"/>
<polygon points="1186.40,724.70 1063.77,937.10 1309.03,937.10" fill="#ececec" stroke="#cccccc" stroke-width="1"/>
<polygon points="1186.40,760.10 1094.43,919.40 1278.37,919.40" fill="#fbfbfb" stroke="#cccccc" stroke-width="1"/>
<polygon points="1186.40,795.50 1125.09,901.70 1247.71,901.70" fill="#ececec" stroke="#cccccc" stroke-width="1"/>
<polygon points="1186.40,830.90 1155.74,884.00 1217.06,884.00" fill="#fbfbfb" stroke="#cccccc" stroke-width="1"/>
<line x1="1186.4" y1="866.3" x2="1186.4" y2="689.3" stroke="#cccccc" stroke-width="1" />
<line x1="1186.4" y1="866.3" x2="1033.1" y2="954.8" stroke="#cccccc" stroke-width="1" />
<line x1="1186.4" y1="866.3" x2="1339.7" y2="954.8" stroke="#cccccc" stroke-width="1" />
<polygon points="1186.40,739.90 1021.86,961.30 1350.94,961.30" fill="none" stroke="#ffffbf" stroke-width="1.87" stroke-linejoin="round"/>
<circle cx="1186.40" cy="739.90" r="2.6" fill="#fff" stroke="#ffffbf" stroke-width="1.3"/>
<circle cx="1021.86" cy="961.30" r="2.6" fill="#fff" stroke="#ffffbf" stroke-width="1.3"/>
<circle cx="1350.94" cy="961.30" r="2.6" fill="#fff" stroke="#ffffbf" stroke-width="1.3"/>
<polygon points="1186.40,720.30 1082.48,926.30 1268.67,913.80" fill="none" stroke="#e0f3f8" stroke-width="1.87" stroke-linejoin="round"/>
<circle cx="1186.40" cy="720.30" r="2.6" fill="#fff" stroke="#e0f3f8" stroke-width="1.3"/>
<circle cx="1082.48" cy="926.30" r="2.6" fill="#fff" stroke="#e0f3f8" stroke-width="1.3"/>
<circle cx="1268.67" cy="913.80" r="2.6" fill="#fff" stroke="#e0f3f8" stroke-width="1.3"/>
<polygon points="1186.40,718.10 1102.92,914.50 1262.61,910.30" fill="none" stroke="#abd9e9" stroke-width="1.87" stroke-linejoin="round"/>
<circle cx="1186.40" cy="718.10" r="2.6" fill="#fff" stroke="#abd9e9" stroke-width="1.3"/>
<circle cx="1102.92" cy="914.50" r="2.6" fill="#fff" stroke="#abd9e9" stroke-width="1.3"/>
<circle cx="1262.61" cy="910.30" r="2.6" fill="#fff" stroke="#abd9e9" stroke-width="1.3"/>
<polygon points="1186.40,710.50 1075.55,930.30 1247.02,901.30" fill="none" stroke="#74add1" stroke-width="1.87" stroke-linejoin="round"/>
<circle cx="1186.40" cy="710.50" r="2.6" fill="#fff" stroke="#74add1" stroke-width="1.3"/>
<circle cx="1075.55" cy="930.30" r="2.6" fill="#fff" stroke="#74add1" stroke-width="1.3"/>
<circle cx="1247.02" cy="901.30" r="2.6" fill="#fff" stroke="#74add1" stroke-width="1.3"/>
<polygon points="1186.40,708.10 1152.11,886.10 1268.67,913.80" fill="none" stroke="#4575b4" stroke-width="1.87" stroke-linejoin="round"/>
<circle cx="1186.40" cy="708.10" r="2.6" fill="#fff" stroke="#4575b4" stroke-width="1.3"/>
<circle cx="1152.11" cy="886.10" r="2.6" fill="#fff" stroke="#4575b4" stroke-width="1.3"/>
<circle cx="1268.67" cy="913.80" r="2.6" fill="#fff" stroke="#4575b4" stroke-width="1.3"/>
<polygon points="1186.40,778.00 1095.47,918.80 1286.86,924.30" fill="none" stroke="#fee090" stroke-width="1.87" stroke-linejoin="round"/>
<circle cx="1186.40" cy="778.00" r="2.6" fill="#fff" stroke="#fee090" stroke-width="1.3"/>
<circle cx="1095.47" cy="918.80" r="2.6" fill="#fff" stroke="#fee090" stroke-width="1.3"/>
<circle cx="1286.86" cy="924.30" r="2.6" fill="#fff" stroke="#fee090" stroke-width="1.3"/>
<polygon points="1186.40,792.80 1128.38,899.80 1264.34,911.30" fill="none" stroke="#fdae61" stroke-width="1.7" stroke-linejoin="round"/>
<circle cx="1186.40" cy="792.80" r="2.6" fill="#fff" stroke="#fdae61" stroke-width="1.3"/>
<circle cx="1128.38" cy="899.80" r="2.6" fill="#fff" stroke="#fdae61" stroke-width="1.3"/>
<circle cx="1264.34" cy="911.30" r="2.6" fill="#fff" stroke="#fdae61" stroke-width="1.3"/>
<polygon points="1186.40,792.80 1139.63,893.30 1262.61,910.30" fill="none" stroke="#f46d43" stroke-width="1.9549999999999998" stroke-linejoin="round"/>
<circle cx="1186.40" cy="792.80" r="2.6" fill="#fff" stroke="#f46d43" stroke-width="1.3"/>
<circle cx="1139.63" cy="893.30" r="2.6" fill="#fff" stroke="#f46d43" stroke-width="1.3"/>
<circle cx="1262.61" cy="910.30" r="2.6" fill="#fff" stroke="#f46d43" stroke-width="1.3"/>
<polygon points="1186.40,817.00 1149.59,887.55 1266.07,912.30" fill="none" stroke="#d73027" stroke-width="2.04" stroke-linejoin="round"/>
<circle cx="1186.40" cy="817.00" r="2.6" fill="#fff" stroke="#d73027" stroke-width="1.3"/>
<circle cx="1149.59" cy="887.55" r="2.6" fill="#fff" stroke="#d73027" stroke-width="1.3"/>
<circle cx="1266.07" cy="912.30" r="2.6" fill="#fff" stroke="#d73027" stroke-width="1.3"/>
<polygon points="1186.40,819.40 1155.22,884.30 1272.14,915.80" fill="none" stroke="#a50026" stroke-width="2.125" stroke-linejoin="round"/>
<circle cx="1186.40" cy="819.40" r="2.6" fill="#fff" stroke="#a50026" stroke-width="1.3"/>
<circle cx="1155.22" cy="884.30" r="2.6" fill="#fff" stroke="#a50026" stroke-width="1.3"/>
<circle cx="1272.14" cy="915.80" r="2.6" fill="#fff" stroke="#a50026" stroke-width="1.3"/>
</g>
<text x="1186.4" y="672.0" font-size="12" fill="#bbbbbb" text-anchor="middle" font-weight="normal" font-style="normal" >Fare (sum)</text>
<g fill="#9a9a9a"><path d="M1322.3,608.8 L1325.5,612 L1323.3,612 L1323.3,614 L1321.3,614 L1321.3,612 L1319.1,612 Z"/><path d="M1322.3,621.8 L1325.5,618.6 L1323.3,618.6 L1323.3,616.6 L1321.3,616.6 L1321.3,618.6 L1319.1,618.6 Z"/><path d="M1315.3,615.3 L1318.5,612.1 L1318.5,614.3 L1320.5,614.3 L1320.5,616.3 L1318.5,616.3 L1318.5,618.5 Z"/><path d="M1329.3,615.3 L1326.1,612.1 L1326.1,614.3 L1324.1,614.3 L1324.1,616.3 L1326.1,616.3 L1326.1,618.5 Z"/></g>
<g stroke="#9a9a9a" stroke-width="1.3" fill="none"><rect x="1331.9" y="609.5" width="11" height="11.8" rx="0.8"/><line x1="1335.6" y1="609.5" x2="1335.6" y2="621.3"/><line x1="1339.2" y1="609.5" x2="1339.2" y2="621.3"/><line x1="1331.9" y1="613.4" x2="1342.9" y2="613.4"/><line x1="1331.9" y1="617.4" x2="1342.9" y2="617.4"/></g>
<path d="M1351.5,610 h2.5 v5 h2.8 l-4.05,4.2 l-4.05,-4.2 h2.8 z M1348,620 h9.3 v1.5 h-9.3 z" fill="#9a9a9a"/>
<path d="M1361,610 h8 v1.2 h-6.8 v10 h-1.2 z" fill="#9a9a9a"/><path d="M1364,612 h5.5 l3.5,3.5 v6.3 h-9 z" fill="#9a9a9a"/>
<g stroke="#9a9a9a" stroke-width="1.2" fill="none"><path d="M1378.3,613.5 v-2.8 h2.8 M1384.3,610.7 h2.8 v2.8 M1387.1,617.5 v2.8 h-2.8 M1381.1,620.3 h-2.8 v-2.8"/></g>
<g stroke="#9a9a9a" stroke-width="1.2" fill="none"><path d="M1395.5,611.5 l-4,4 l4,4 M1399.5,611.5 l4,4 l-4,4"/></g>
<g stroke="#9a9a9a" stroke-width="1.3" fill="none"><path d="M1408,611 l9,9 M1417,611 l-9,9"/></g>
<defs><clipPath id="pclip"><rect x="1425" y="630" width="472" height="302"/></clipPath><filter id="pshadow" x="-20%" y="-20%" width="140%" height="140%"><feGaussianBlur stdDeviation="7"/></filter><radialGradient id="bandg" cx="1661" cy="866.1" r="212.5" gradientUnits="userSpaceOnUse"><stop offset="0.8" stop-color="#566f82"/><stop offset="0.93" stop-color="#5b7589"/><stop offset="1" stop-color="#7890a2"/></radialGradient><radialGradient id="bandg2" cx="1661" cy="866.1" r="212.5" gradientUnits="userSpaceOnUse"><stop offset="0.8" stop-color="#d2d2d2"/><stop offset="0.93" stop-color="#dcdcdc"/><stop offset="1" stop-color="#e8e8e8"/></radialGradient><radialGradient id="ballg" cx="1657" cy="862" r="14" gradientUnits="userSpaceOnUse"><stop offset="0" stop-color="#eeeeee"/><stop offset="1" stop-color="#a9a9a9"/></radialGradient></defs>
<g clip-path="url(#pclip)">
<circle cx="1661" cy="868.1" r="214.5" fill="#000" opacity="0.45" filter="url(#pshadow)"/>
<path d="M1448.50,866.10 A212.5,212.5 0 0 1 1873.50,866.10 L1831.00,866.10 A170,170 0 0 0 1491.00,866.10 Z" fill="url(#bandg)" />
<path d="M1873.50,866.10 A212.5,212.5 0 0 1 1448.50,866.10 L1491.00,866.10 A170,170 0 0 0 1831.00,866.10 Z" fill="url(#bandg2)" />
<path d="M1661,866.1 L1491.00,866.10 A170,170 0 0 1 1831.00,866.10 Z" fill="#cdd1d5" />
<path d="M1661,866.1 L1831.00,866.10 A170,170 0 0 1 1491.00,866.10 Z" fill="#e4e4e4" />
<line x1="1661.0" y1="866.1" x2="1661.0" y2="696.1" stroke="#6a6a6a" stroke-width="0.9" />
<line x1="1661.0" y1="866.1" x2="1705.0" y2="701.9" stroke="#6a6a6a" stroke-width="0.9" />
<line x1="1661.0" y1="866.1" x2="1746.0" y2="718.9" stroke="#6a6a6a" stroke-width="0.9" />
<line x1="1661.0" y1="866.1" x2="1781.2" y2="745.9" stroke="#6a6a6a" stroke-width="0.9" />
<line x1="1661.0" y1="866.1" x2="1808.2" y2="781.1" stroke="#6a6a6a" stroke-width="0.9" />
<line x1="1661.0" y1="866.1" x2="1825.2" y2="822.1" stroke="#6a6a6a" stroke-width="0.9" />
<line x1="1661.0" y1="866.1" x2="1831.0" y2="866.1" stroke="#6a6a6a" stroke-width="0.9" />
<line x1="1661.0" y1="866.1" x2="1825.2" y2="910.1" stroke="#6a6a6a" stroke-width="0.9" />
<line x1="1661.0" y1="866.1" x2="1808.2" y2="951.1" stroke="#6a6a6a" stroke-width="0.9" />
<line x1="1661.0" y1="866.1" x2="1781.2" y2="986.3" stroke="#6a6a6a" stroke-width="0.9" />
<line x1="1661.0" y1="866.1" x2="1746.0" y2="1013.3" stroke="#6a6a6a" stroke-width="0.9" />
<line x1="1661.0" y1="866.1" x2="1705.0" y2="1030.3" stroke="#6a6a6a" stroke-width="0.9" />
<line x1="1661.0" y1="866.1" x2="1661.0" y2="1036.1" stroke="#6a6a6a" stroke-width="0.9" />
<line x1="1661.0" y1="866.1" x2="1617.0" y2="1030.3" stroke="#6a6a6a" stroke-width="0.9" />
<line x1="1661.0" y1="866.1" x2="1576.0" y2="1013.3" stroke="#6a6a6a" stroke-width="0.9" />
<line x1="1661.0" y1="866.1" x2="1540.8" y2="986.3" stroke="#6a6a6a" stroke-width="0.9" />
<line x1="1661.0" y1="866.1" x2="1513.8" y2="951.1" stroke="#6a6a6a" stroke-width="0.9" />
<line x1="1661.0" y1="866.1" x2="1496.8" y2="910.1" stroke="#6a6a6a" stroke-width="0.9" />
<line x1="1661.0" y1="866.1" x2="1491.0" y2="866.1" stroke="#6a6a6a" stroke-width="0.9" />
<line x1="1661.0" y1="866.1" x2="1496.8" y2="822.1" stroke="#6a6a6a" stroke-width="0.9" />
<line x1="1661.0" y1="866.1" x2="1513.8" y2="781.1" stroke="#6a6a6a" stroke-width="0.9" />
<line x1="1661.0" y1="866.1" x2="1540.8" y2="745.9" stroke="#6a6a6a" stroke-width="0.9" />
<line x1="1661.0" y1="866.1" x2="1576.0" y2="718.9" stroke="#6a6a6a" stroke-width="0.9" />
<line x1="1661.0" y1="866.1" x2="1617.0" y2="701.9" stroke="#6a6a6a" stroke-width="0.9" />
<path d="M1661,866.1 L1661.00,789.10 A77,77 0 0 1 1680.93,791.72 Z" fill="#4575b4" />
<path d="M1661,866.1 L1674.46,815.87 A52,52 0 0 1 1687.00,821.07 Z" fill="#74add1" />
<path d="M1661,866.1 L1698.50,801.15 A75,75 0 0 1 1714.03,813.07 Z" fill="#abd9e9" />
<path d="M1661,866.1 L1689.28,837.82 A40,40 0 0 1 1695.64,846.10 Z" fill="#e0f3f8" />
<path d="M1661,866.1 L1751.07,814.10 A104,104 0 0 1 1761.46,839.18 Z" fill="#ffffbf" />
<path d="M1661,866.1 L1674.52,862.48 A14,14 0 0 1 1675.00,866.10 Z" fill="#fee090" />
<path d="M1661,866.1 L1685.15,872.57 A25,25 0 0 1 1682.65,878.60 Z" fill="#f46d43" />
<path d="M1661,866.1 L1706.90,892.60 A53,53 0 0 1 1698.48,903.58 Z" fill="#d73027" />
<path d="M1661,866.1 L1689.28,894.38 A40,40 0 0 1 1681.00,900.74 Z" fill="#a50026" />
<path d="M1661,866.1 L1688.00,912.87 A54,54 0 0 1 1674.98,918.26 Z" fill="#4575b4" />
<path d="M1661,866.1 L1689.47,972.35 A110,110 0 0 1 1661.00,976.10 Z" fill="#74add1" />
<path d="M1661,866.1 L1661.00,884.10 A18,18 0 0 1 1656.34,883.49 Z" fill="#abd9e9" />
<path d="M1661,866.1 L1632.53,972.35 A110,110 0 0 1 1606.00,961.36 Z" fill="#e0f3f8" />
<path d="M1661,866.1 L1632.00,916.33 A58,58 0 0 1 1619.99,907.11 Z" fill="#ffffbf" />
<path d="M1661,866.1 L1650.39,876.71 A15,15 0 0 1 1648.01,873.60 Z" fill="#fee090" />
<path d="M1661,866.1 L1576.13,915.10 A98,98 0 0 1 1566.34,891.46 Z" fill="#fdae61" />
<path d="M1661,866.1 L1602.08,881.89 A61,61 0 0 1 1600.00,866.10 Z" fill="#f46d43" />
<path d="M1661,866.1 L1568.00,866.10 A93,93 0 0 1 1571.17,842.03 Z" fill="#d73027" />
<path d="M1661,866.1 L1573.10,842.55 A91,91 0 0 1 1582.19,820.60 Z" fill="#a50026" />
<path d="M1661,866.1 L1531.10,791.10 A150,150 0 0 1 1554.93,760.03 Z" fill="#4575b4" />
<path d="M1661,866.1 L1564.13,769.23 A137,137 0 0 1 1592.50,747.45 Z" fill="#74add1" />
<path d="M1661,866.1 L1579.00,724.07 A164,164 0 0 1 1618.55,707.69 Z" fill="#abd9e9" />
<path d="M1661,866.1 L1634.86,768.54 A101,101 0 0 1 1661.00,765.10 Z" fill="#e0f3f8" />
<line x1="1448.5" y1="866.1" x2="1873.5" y2="866.1" stroke="#858585" stroke-width="0.8" />
<circle cx="1661" cy="866.1" r="11.5" fill="url(#ballg)"/>
<line x1="1661.0" y1="654.6" x2="1661.0" y2="660.1" stroke="#fff" stroke-width="2" />
<text x="1661.0" y="674.9" font-size="12.5" fill="#222" text-anchor="middle" font-weight="normal" font-style="normal" >24</text>
<line x1="1715.7" y1="661.8" x2="1714.3" y2="667.1" stroke="#fff" stroke-width="2" />
<text x="1711.6" y="681.6" font-size="12.5" fill="#222" text-anchor="middle" font-weight="normal" font-style="normal" >1</text>
<line x1="1766.8" y1="682.9" x2="1764.0" y2="687.7" stroke="#fff" stroke-width="2" />
<text x="1758.8" y="701.1" font-size="12.5" fill="#222" text-anchor="middle" font-weight="normal" font-style="normal" >2</text>
<line x1="1810.6" y1="716.5" x2="1806.7" y2="720.4" stroke="#fff" stroke-width="2" />
<text x="1799.2" y="732.2" font-size="12.5" fill="#222" text-anchor="middle" font-weight="normal" font-style="normal" >3</text>
<line x1="1844.2" y1="760.4" x2="1839.4" y2="763.1" stroke="#fff" stroke-width="2" />
<text x="1830.3" y="772.6" font-size="12.5" fill="#222" text-anchor="middle" font-weight="normal" font-style="normal" >4</text>
<line x1="1865.3" y1="811.4" x2="1860.0" y2="812.8" stroke="#fff" stroke-width="2" />
<text x="1849.8" y="819.8" font-size="12.5" fill="#222" text-anchor="middle" font-weight="normal" font-style="normal" >5</text>
<line x1="1872.5" y1="866.1" x2="1867.0" y2="866.1" stroke="#fff" stroke-width="2" />
<text x="1856.5" y="870.4" font-size="12.5" fill="#222" text-anchor="middle" font-weight="normal" font-style="normal" >6</text>
<line x1="1865.3" y1="920.8" x2="1860.0" y2="919.4" stroke="#fff" stroke-width="2" />
<text x="1849.8" y="921.0" font-size="12.5" fill="#222" text-anchor="middle" font-weight="normal" font-style="normal" >7</text>
<line x1="1844.2" y1="971.9" x2="1839.4" y2="969.1" stroke="#fff" stroke-width="2" />
<text x="1830.3" y="968.1" font-size="12.5" fill="#222" text-anchor="middle" font-weight="normal" font-style="normal" >8</text>
<line x1="1810.6" y1="1015.7" x2="1806.7" y2="1011.8" stroke="#fff" stroke-width="2" />
<text x="1799.2" y="1008.6" font-size="12.5" fill="#222" text-anchor="middle" font-weight="normal" font-style="normal" >9</text>
<line x1="1766.8" y1="1049.3" x2="1764.0" y2="1044.5" stroke="#fff" stroke-width="2" />
<text x="1758.8" y="1039.7" font-size="12.5" fill="#222" text-anchor="middle" font-weight="normal" font-style="normal" >10</text>
<line x1="1715.7" y1="1070.4" x2="1714.3" y2="1065.1" stroke="#fff" stroke-width="2" />
<text x="1711.6" y="1059.2" font-size="12.5" fill="#222" text-anchor="middle" font-weight="normal" font-style="normal" >11</text>
<line x1="1661.0" y1="1077.6" x2="1661.0" y2="1072.1" stroke="#fff" stroke-width="2" />
<text x="1661.0" y="1065.9" font-size="12.5" fill="#222" text-anchor="middle" font-weight="normal" font-style="normal" >12</text>
<line x1="1606.3" y1="1070.4" x2="1607.7" y2="1065.1" stroke="#fff" stroke-width="2" />
<text x="1610.4" y="1059.2" font-size="12.5" fill="#222" text-anchor="middle" font-weight="normal" font-style="normal" >13</text>
<line x1="1555.2" y1="1049.3" x2="1558.0" y2="1044.5" stroke="#fff" stroke-width="2" />
<text x="1563.2" y="1039.7" font-size="12.5" fill="#222" text-anchor="middle" font-weight="normal" font-style="normal" >14</text>
<line x1="1511.4" y1="1015.7" x2="1515.3" y2="1011.8" stroke="#fff" stroke-width="2" />
<text x="1522.8" y="1008.6" font-size="12.5" fill="#222" text-anchor="middle" font-weight="normal" font-style="normal" >15</text>
<line x1="1477.8" y1="971.9" x2="1482.6" y2="969.1" stroke="#fff" stroke-width="2" />
<text x="1491.7" y="968.2" font-size="12.5" fill="#222" text-anchor="middle" font-weight="normal" font-style="normal" >16</text>
<line x1="1456.7" y1="920.8" x2="1462.0" y2="919.4" stroke="#fff" stroke-width="2" />
<text x="1472.2" y="921.0" font-size="12.5" fill="#222" text-anchor="middle" font-weight="normal" font-style="normal" >17</text>
<line x1="1449.5" y1="866.1" x2="1455.0" y2="866.1" stroke="#fff" stroke-width="2" />
<text x="1465.5" y="870.4" font-size="12.5" fill="#222" text-anchor="middle" font-weight="normal" font-style="normal" >18</text>
<line x1="1456.7" y1="811.4" x2="1462.0" y2="812.8" stroke="#fff" stroke-width="2" />
<text x="1472.2" y="819.8" font-size="12.5" fill="#222" text-anchor="middle" font-weight="normal" font-style="normal" >19</text>
<line x1="1477.8" y1="760.4" x2="1482.6" y2="763.1" stroke="#fff" stroke-width="2" />
<text x="1491.7" y="772.6" font-size="12.5" fill="#222" text-anchor="middle" font-weight="normal" font-style="normal" >20</text>
<line x1="1511.4" y1="716.5" x2="1515.3" y2="720.4" stroke="#fff" stroke-width="2" />
<text x="1522.8" y="732.2" font-size="12.5" fill="#222" text-anchor="middle" font-weight="normal" font-style="normal" >21</text>
<line x1="1555.2" y1="682.9" x2="1558.0" y2="687.7" stroke="#fff" stroke-width="2" />
<text x="1563.2" y="701.1" font-size="12.5" fill="#222" text-anchor="middle" font-weight="normal" font-style="normal" >22</text>
<line x1="1606.3" y1="661.8" x2="1607.7" y2="667.1" stroke="#fff" stroke-width="2" />
<text x="1610.4" y="681.6" font-size="12.5" fill="#222" text-anchor="middle" font-weight="normal" font-style="normal" >23</text>
</g>
<defs><filter id="fabsh" x="-30%" y="-30%" width="160%" height="160%"><feDropShadow dx="0" dy="1" stdDeviation="1.5" flood-color="#000" flood-opacity="0.3"/></filter></defs>
<circle cx="1857" cy="891.8" r="20" fill="#1a76d2" filter="url(#fabsh)"/>
<rect x="1847.8" y="883" width="18.4" height="18" rx="2" fill="#fff"/>
<rect x="1851.8" y="890" width="2" height="7" fill="#4a90e2"/><rect x="1855.8" y="887" width="2" height="10" fill="#4a90e2"/><rect x="1859.8" y="893" width="2" height="4" fill="#4a90e2"/>
</svg>
<div id="hdr"></div>
<div id="sb"></div>
<svg id="top" width="1917" height="932" viewBox="0 0 1917 932">
<polyline points="22.3,8.6 12.6,18.2 22.3,27.8" fill="none" stroke="#10a0e8" stroke-width="3"/>
<text x="47.3" y="22.2" font-size="17.6" fill="#fff">Chicago Taxi Trips - Geo Heatmap</text>
<g fill="#aca79f"><rect x="1602" y="9" width="11.5" height="2"/><rect x="1605" y="14" width="12" height="2"/><rect x="1609" y="19" width="4.3" height="2"/></g>
<circle cx="1620.5" cy="7.7" r="7.6" fill="#4299f2"/>
<text x="1620.7" y="11.6" font-size="10.5" font-weight="bold" fill="#fff" text-anchor="middle">1</text>
<polygon points="1633,22.7 1643.6,12 1643.6,22.7" fill="#9a9a9a"/>
<circle cx="1849.5" cy="14.5" r="9.7" fill="#9d9d9d"/><circle cx="1845" cy="12" r="5" fill="#3e4852"/>
<g stroke="#9a9a9a" stroke-width="2" fill="none"><path d="M1878.6,9.2 A4.55,4.55 0 0 1 1887.7,9.2 V12"/><rect x="1876" y="12" width="14.6" height="12.4" rx="1"/></g><circle cx="1883.3" cy="18" r="1.7" fill="#9a9a9a"/>
<rect x="1897" y="36" width="3" height="896" fill="#e9e9e9"/>
<polygon points="1904.5,9 1908.5,4.8 1912.5,9" fill="#a3a3a3"/>
<rect x="1902" y="15" width="13" height="377" fill="#c1c1c1"/>
<polygon points="1904.5,922.5 1908.5,926.7 1912.5,922.5" fill="#505050"/>
<defs><clipPath id="oclip"><circle cx="1747" cy="27.8" r="106.6"/></clipPath><filter id="osh" x="-30%" y="-30%" width="160%" height="160%"><feGaussianBlur stdDeviation="3.5"/></filter><linearGradient id="obsh" x1="0" y1="0" x2="0" y2="1"><stop offset="0" stop-color="#000" stop-opacity="0.28"/><stop offset="0.35" stop-color="#000" stop-opacity="0.12"/><stop offset="1" stop-color="#000" stop-opacity="0"/></linearGradient></defs>
<circle cx="1747" cy="29.3" r="106.6" fill="#000" opacity="0.13" filter="url(#osh)"/>
<g clip-path="url(#oclip)"><rect x="1630" y="70" width="240" height="80" fill="#fff"/><rect x="1630" y="0" width="240" height="70.2" fill="#3e4852"/><rect x="1630" y="70.2" width="240" height="14" fill="url(#obsh)"/></g>
<path transform="translate(1653.8,5.6) scale(2)" d="M9 16h6v-6h4l-7-7-7 7h4zm-4 2h14v2H5z" fill="#9e9e9e"/>
<path transform="translate(1720.8,5.5) scale(2)" d="M12 2C6.48 2 2 6.48 2 12s4.48 10 10 10 10-4.48 10-10S17.52 2 12 2zm-1 17.93c-3.95-.49-7-3.85-7-7.93 0-.62.08-1.21.21-1.79L9 15v1c0 1.1.9 2 2 2v1.930zm6.9-2.54c-.26-.81-1-1.39-1.9-1.39h-1v-3c0-.55-.45-1-1-1H8v-2h2c.55 0 1-.45 1-1V7h2c1.1 0 2-.9 2-2v-.41c2.93 1.19 5 4.06 5 7.41 0 2.08-.8 3.97-2.1 5.39z" fill="#9e9e9e"/>
<rect x="1717.6" y="1.5" width="55.8" height="57" fill="none" stroke="#e6212a" stroke-width="3"/>
<g fill="#9e9e9e"><rect x="1794.2" y="11.7" width="36.2" height="4"/><rect x="1794.2" y="19.7" width="24.1" height="4"/><rect x="1794.2" y="27.5" width="36.2" height="4"/><rect x="1794.2" y="35.5" width="24.1" height="4"/><rect x="1794.2" y="43.4" width="36.2" height="4"/></g>
</svg>
</body></html>
